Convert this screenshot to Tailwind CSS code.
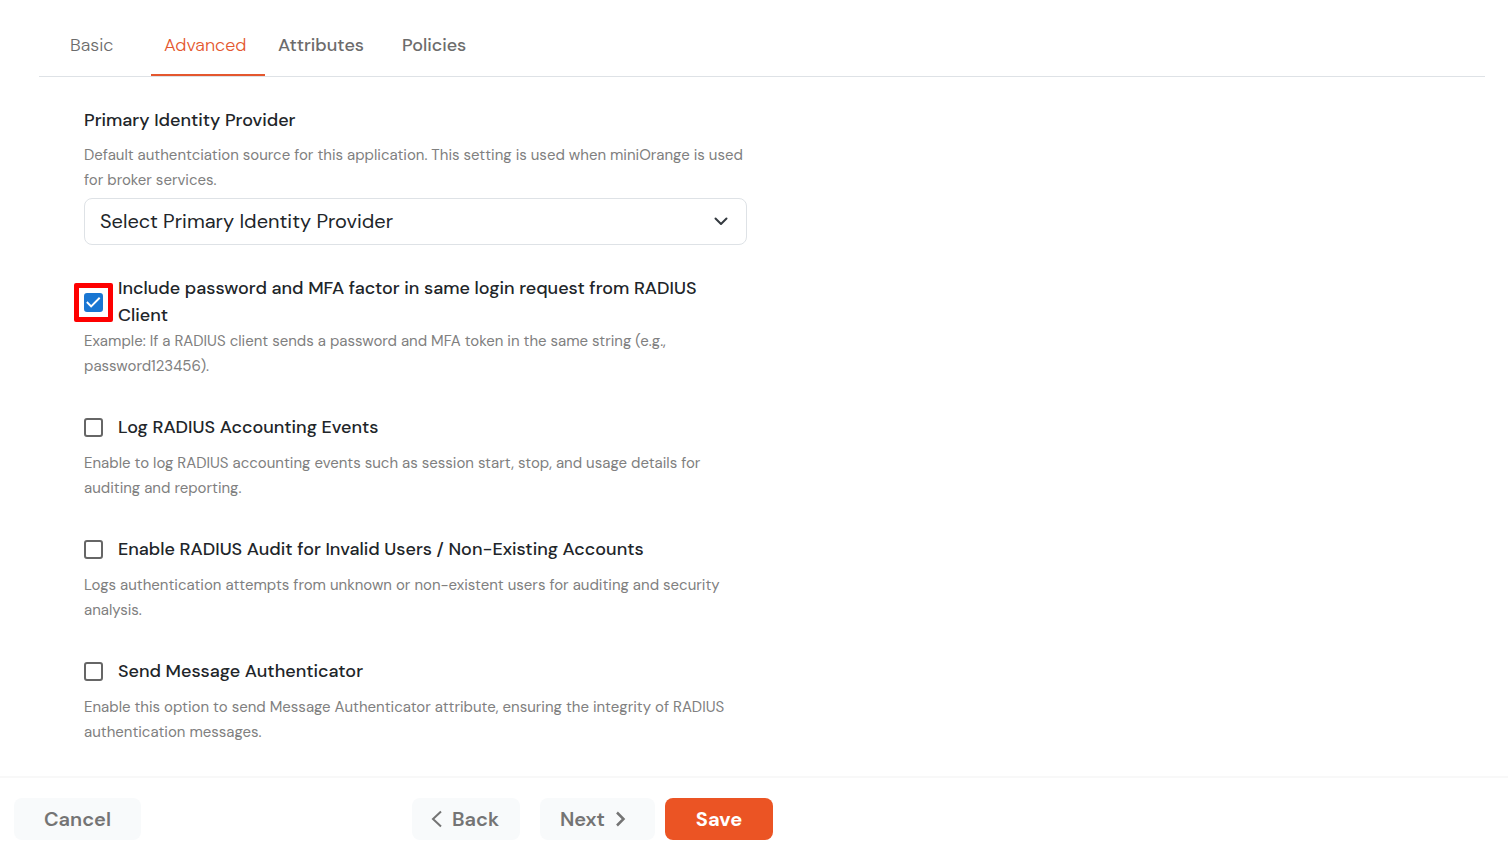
<!DOCTYPE html>
<html lang="en">
<head>
    <meta charset="UTF-8">
    <meta name="viewport" content="width=device-width, initial-scale=1.0">
    <title>RADIUS Application - Advanced</title>
    <script src="https://cdn.jsdelivr.net/npm/@tailwindcss/browser@4"></script>
</head>
<body class="bg-white font-['DM_Sans',Inter,sans-serif] text-[#212529]">
    <div class="min-h-screen flex flex-col">
        <!-- Tabs -->
        <nav class="ml-[39px] mr-[23px] h-[77px] flex border-b border-[#dee2e6] text-lg text-[#6c6c6c]">
            <a href="#" class="w-28 pl-[31px] pt-8 leading-[26px] font-light">Basic</a>
            <a href="#" class="w-[114px] pl-[13px] pt-8 leading-[26px] font-light text-[#e4572e] border-b-2 border-[#e4572e]" aria-current="page">Advanced</a>
            <a href="#" class="w-[124px] pl-[13px] pt-8 leading-[26px] font-medium">Attributes</a>
            <a href="#" class="pl-[13px] pt-8 leading-[26px] font-medium">Policies</a>
        </nav>

        <!-- Settings -->
        <main class="flex-1 ml-[84px] max-w-[663px] pt-[30px] pb-[29px]">
            <div>
                <label for="idp" class="block text-lg leading-[27px] font-medium">Primary Identity Provider</label>
                <p class="mt-[9px] text-[15px] leading-[25px] text-[#808080]">Default authentciation source for this application. This setting is used when miniOrange is used for broker services.</p>
                <div class="relative mt-[5px]">
                    <select id="idp" class="block w-full h-[47px] pl-[15px] pr-12 pb-[2px] appearance-none rounded-lg border border-[#dee2e6] bg-white text-xl">
                        <option>Select Primary Identity Provider</option>
                    </select>
                    <svg class="absolute right-[18px] top-4 w-4 h-4 pointer-events-none" viewBox="0 0 16 16" fill="none" stroke="#343a40" stroke-width="2" stroke-linecap="round" stroke-linejoin="round"><path d="m2.500 4.500 5.500 5.500 5.500-5.500"/></svg>
                </div>
            </div>

            <div class="mt-[30px]">
                <div class="flex items-center gap-[15px]">
                    <div class="relative shrink-0">
                        <input id="mfa" type="checkbox" checked class="peer block w-[19px] h-[19px] appearance-none rounded-[3px] border-2 border-[#666] checked:bg-[#1976d2] checked:border-[#1976d2]">
                        <svg class="absolute inset-0 w-[19px] h-[19px] pointer-events-none hidden peer-checked:block" viewBox="0 0 20 20" fill="none" stroke="#fff" stroke-width="2"><path d="m3 9.5 4.5 4.5L16.500 5"/></svg>
                        <span class="absolute -inset-[10px] border-[5px] border-[#fe0000] rounded-xs pointer-events-none"></span>
                    </div>
                    <label for="mfa" class="text-lg leading-[27px] font-medium">Include password and MFA factor in same login request from RADIUS Client</label>
                </div>
                <p class="text-[15px] leading-[25px] text-[#808080]">Example: If a RADIUS client sends a password and MFA token in the same string (e.g., password123456).</p>
            </div>

            <div class="mt-[35px]">
                <div class="flex items-center gap-[15px]">
                    <input id="accounting" type="checkbox" class="w-[19px] h-[19px] appearance-none rounded-[3px] border-2 border-[#666] checked:bg-[#1976d2]">
                    <label for="accounting" class="text-lg leading-[27px] font-medium">Log RADIUS Accounting Events</label>
                </div>
                <p class="mt-[10px] text-[15px] leading-[25px] text-[#808080]">Enable to log RADIUS accounting events such as session start, stop, and usage details for auditing and reporting.</p>
            </div>

            <div class="mt-[35px]">
                <div class="flex items-center gap-[15px]">
                    <input id="audit" type="checkbox" class="w-[19px] h-[19px] appearance-none rounded-[3px] border-2 border-[#666] checked:bg-[#1976d2]">
                    <label for="audit" class="text-lg leading-[27px] font-medium">Enable RADIUS Audit for Invalid Users / Non-Existing Accounts</label>
                </div>
                <p class="mt-[10px] text-[15px] leading-[25px] text-[#808080]">Logs authentication attempts from unknown or non-existent users for auditing and security analysis.</p>
            </div>

            <div class="mt-[35px]">
                <div class="flex items-center gap-[15px]">
                    <input id="authenticator" type="checkbox" class="w-[19px] h-[19px] appearance-none rounded-[3px] border-2 border-[#666] checked:bg-[#1976d2]">
                    <label for="authenticator" class="text-lg leading-[27px] font-medium">Send Message Authenticator</label>
                </div>
                <p class="mt-[10px] text-[15px] leading-[25px] text-[#808080]">Enable this option to send Message Authenticator attribute, ensuring the integrity of RADIUS authentication messages.</p>
            </div>
        </main>

        <!-- Actions -->
        <footer class="border-t-2 border-[#f8f8f8] px-[14px] pt-5 pb-[11px]">
            <div class="max-w-[759px] flex text-xl font-semibold text-[#747474]">
                <button type="button" class="w-[127px] h-[42px] rounded-lg bg-[#f8fafb]">Cancel</button>
                <button type="button" class="ml-auto w-[108px] h-[42px] rounded-lg bg-[#f8fafb] flex items-center pl-[18px] gap-[10px]">
                    <svg class="w-3 h-[18px]" viewBox="0 0 12 18" fill="none" stroke="currentColor" stroke-width="2"><path d="M11 1.500 3 9l8 7.500"/></svg>
                    Back
                </button>
                <button type="button" class="ml-5 w-[115px] h-[42px] rounded-lg bg-[#f8fafb] flex items-center pl-5 gap-[10px]">
                    Next
                    <svg class="w-3 h-[18px]" viewBox="0 0 12 18" fill="none" stroke="currentColor" stroke-width="2.500"><path d="m2 2.500 6.500 6.500L2 15.500"/></svg>
                </button>
                <button type="button" class="ml-[10px] w-[108px] h-[42px] rounded-lg bg-[#eb5424] text-white font-bold">Save</button>
            </div>
        </footer>
    </div>
</body>
</html>
